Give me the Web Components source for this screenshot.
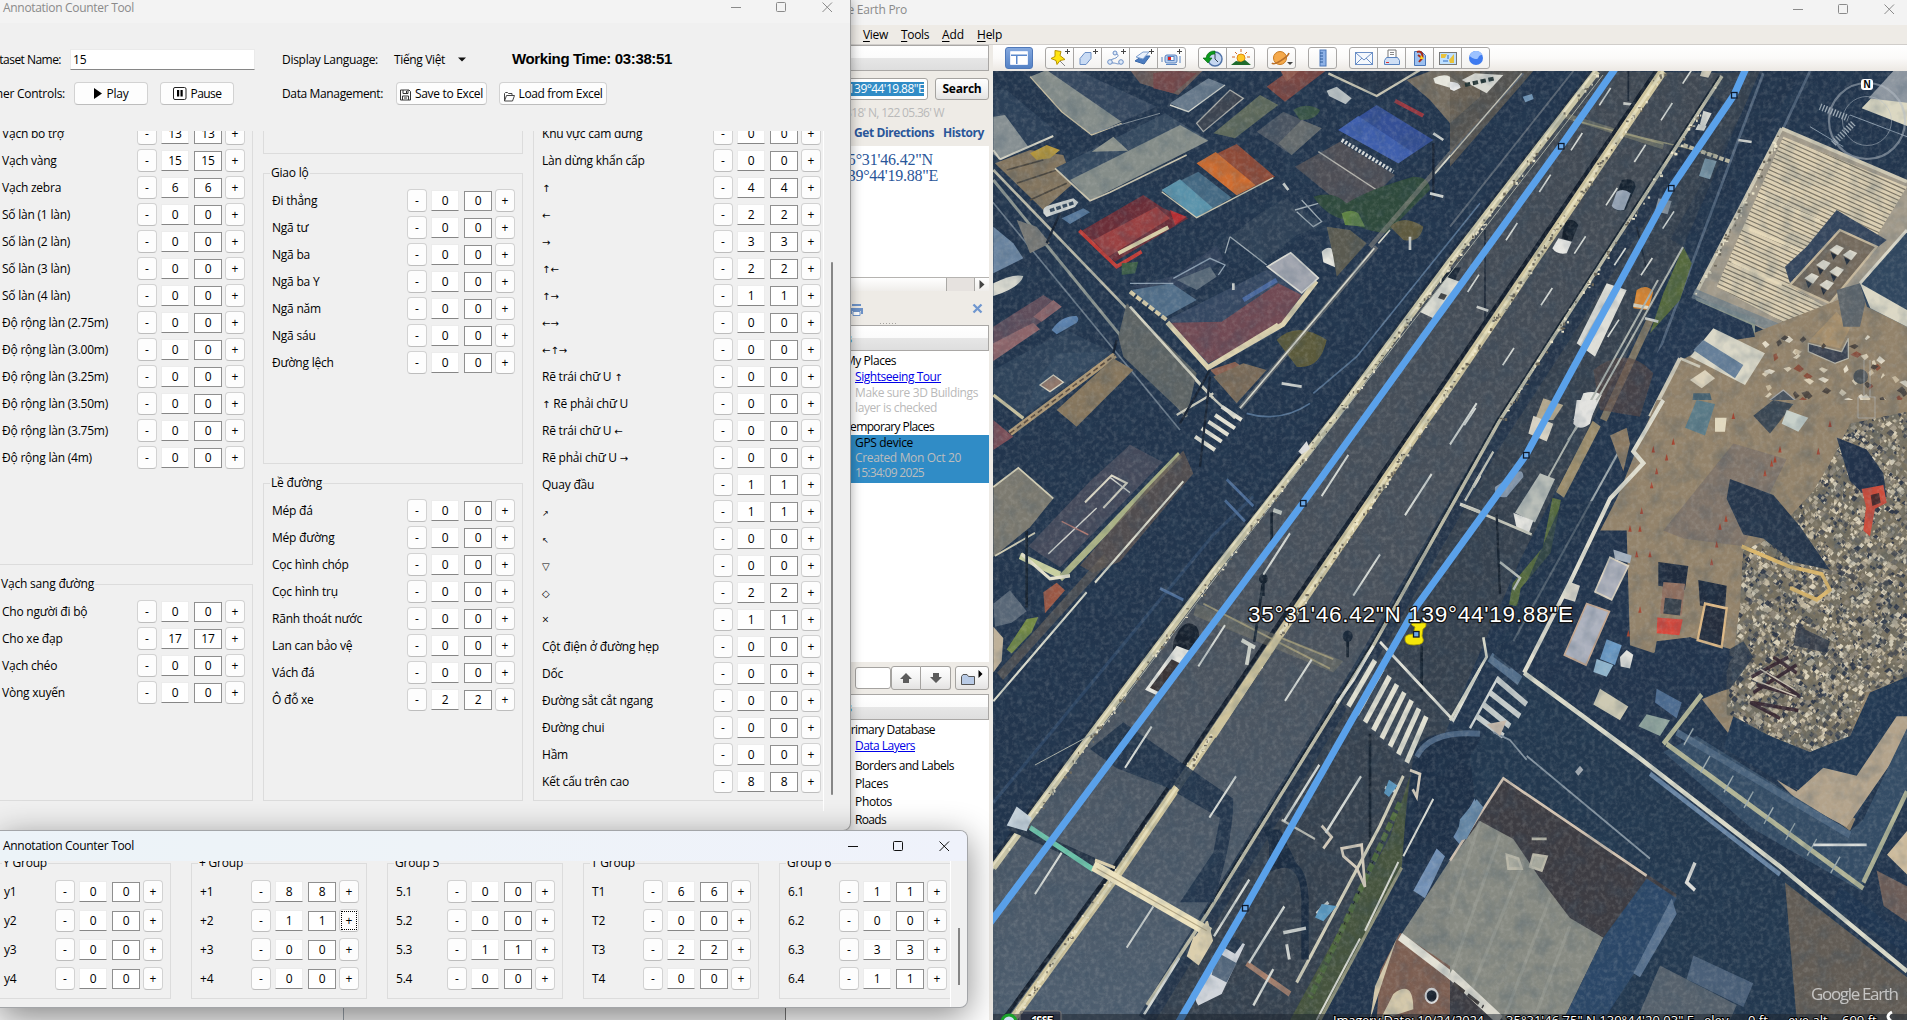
<!DOCTYPE html>
<html lang="vi">
<head>
<meta charset="utf-8">
<title>Annotation Counter Tool</title>
<style>
html,body{margin:0;height:100%;overflow:hidden}
body{font:12px/16px "Open Sans","Noto Sans",sans-serif;color:#000;background:#f3f3f3}
</style>
</head>
<body>
<desk-top></desk-top>
<script>
const def=(name,html,init)=>customElements.define(name,class extends HTMLElement{
  constructor(){super();this.attachShadow({mode:'open'});}
  connectedCallback(){
    if(this.done)return;this.done=true;
    this.shadowRoot.innerHTML=typeof html==='function'?html(this):html;
    if(init)init(this);
  }
});

/* text run set to a known width by letter spacing */
def('fit-text','<style>:host{display:inline-block;white-space:pre}</style><span><slot></slot></span>',el=>{
  const w=+el.getAttribute('w');if(!w)return;
  el.style.letterSpacing='0px';
  const now=el.shadowRoot.querySelector('span').getBoundingClientRect().width;
  el.style.letterSpacing=((w-now)/el.textContent.length).toFixed(3)+'px';
});

def('counter-row',el=>`<style>
:host{display:flex;align-items:center;height:var(--pitch,27px);flex:none}
.l{flex:1;white-space:pre;letter-spacing:-.22px;position:relative;top:.5px}
.b{box-sizing:border-box;width:20px;height:23px;border:1px solid #d2d2d2;border-bottom-color:#bdbdbd;border-radius:4px;background:#fdfdfd;text-align:center;line-height:21px}
.e,.r{box-sizing:border-box;width:28px;text-align:center;background:#fff;letter-spacing:-.2px}
.e{height:21px;border:1px solid #ececec;border-bottom:1px solid #868686;line-height:20px;margin:0 5px 0 4px}
.r{height:20px;border:1px solid #8f8f8f;line-height:18px;margin-right:3px}
.s{font:10px/10px "DejaVu Sans";letter-spacing:0}
.d{font-size:8px}
.f{position:relative}
.f::after{content:"";position:absolute;inset:1px;border:1px dotted #000}
</style><span class="l">${el.getAttribute('label').replace(/[↑←→▽◇]+/g,'<span class="s">$&</span>').replace(/[↗↖]/g,'<span class="s d">$&</span>')}</span><span class="b">-</span><span class="e">${el.getAttribute('n')}</span><span class="r">${el.getAttribute('n')}</span><span class="b ${el.hasAttribute('focused')?'f':''}">+</span>`);

def('counter-group',el=>{
  const rows=(el.getAttribute('rows')||'').split('|').filter(Boolean).map(r=>{
    const[a,b,f]=r.split('=');return`<counter-row label="${a}" n="${b}" ${f?'focused':''}></counter-row>`}).join('');
  const t=el.getAttribute('name');
  return`<style>:host{display:block;flex:none}
fieldset{box-sizing:border-box;height:100%;margin:0;border:1px solid #dcdcdc;padding:6px 7px 0 8px;min-width:0}
legend{padding:0 1px;margin-left:-2px;height:16px;line-height:16px;letter-spacing:-.2px;min-width:1px}
</style><fieldset>${t?`<legend>${t}</legend>`:'<div style="height:15px"></div>'}${rows}</fieldset>`});

def('window-buttons',el=>`<style>:host{display:flex;color:${el.getAttribute('ink')||'#8a8a8a'}}svg{display:block}</style>
<svg width="104" height="12" viewBox="0 0 104 12" fill="none" stroke="currentColor"><path d="M1 6.5h10"/><rect x="46.500" y="1.500" width="9" height="9" rx="1"/><path d="m92.500 1.500 9.500 9.500m0-9.500-9.500 9.500"/></svg>`);

def('tool-button',el=>`<style>:host{display:flex;align-items:center;justify-content:center;box-sizing:border-box;height:23px;border:1px solid #d2d2d2;border-bottom-color:#bdbdbd;border-radius:4px;background:#fdfdfd;gap:5px;white-space:pre}</style><slot></slot>`);

def('main-window',()=>`<style>
:host{display:flex;flex-direction:column;box-sizing:border-box;background:#f0f0f0;border-right:1px solid #9b9b9b;border-bottom:1px solid #aaa;border-radius:0 0 8px 0;overflow:hidden;box-shadow:0 0 12px rgba(0,0,0,.35)}
.t{height:23px;flex:none;background:#f3f3f3;display:flex;justify-content:space-between;color:#8a8a8a;box-sizing:border-box;padding:0 16px 0 3px;line-height:16px}
.t window-buttons{margin-top:1px}
.r{display:flex;align-items:center;flex:none;position:relative}
.r1{height:21px;margin-top:26px}.r2{height:23px;margin-top:12px}
.lab{display:flex;justify-content:flex-end;flex:none}
.in{box-sizing:border-box;width:185px;height:21px;background:#fff;border:1px solid #eaeaea;border-bottom-color:#868686;padding-left:2px;line-height:19px}
.h{font:bold 15px/18px "Liberation Sans",Arial,sans-serif}
.body{display:flex;margin-top:26px;height:680px;flex:none}
.cl{width:823px;border-right:1px solid #fff;overflow:hidden;flex:none}
.cols{display:flex;gap:10px;margin:-33px 0 0 -7px;width:840px}
.c{display:flex;flex-direction:column;gap:11px;flex:none}
.sb{width:2px;height:533px;background:#868686;margin:131px 0 0 7px;border-radius:1px}
</style>
<div class="t"><fit-text w="131">Annotation Counter Tool</fit-text><window-buttons></window-buttons></div>
<div class="r r1"><span class="lab" style="width:61px"><fit-text w="76">Dataset Name:</fit-text></span><span class="in" style="margin-left:9px">15</span>
<fit-text w="96" style="margin-left:27px">Display Language:</fit-text><fit-text w="51" style="margin-left:16px">Tiếng Việt</fit-text>
<svg width="8" height="5" style="margin-left:13px"><path d="M0 .5h8l-4 4z" fill="#111"/></svg>
<fit-text class="h" w="160" style="margin-left:46px;margin-top:-2px">Working Time: 03:38:51</fit-text></div>
<div class="r r2"><span class="lab" style="width:65px"><fit-text w="82">Timer Controls:</fit-text></span>
<tool-button style="width:74px;margin-left:9px"><svg width="8" height="11"><path d="M0 0v11l8-5.500z"/></svg><fit-text w="22">Play</fit-text></tool-button>
<tool-button style="width:74px;margin-left:12px;gap:4px"><svg width="14" height="13" viewBox="0 0 14 13"><rect x=".5" y=".5" width="12.500" height="12" rx="1.500" fill="#fff" stroke="#222"/><path d="M4 3h2.200v6.500H4zM7.500 3h2.200v6.500H7.500z"/></svg><fit-text w="31">Pause</fit-text></tool-button>
<fit-text w="101" style="margin-left:48px">Data Management:</fit-text>
<tool-button style="width:91px;margin-left:13px;gap:4px"><svg width="11" height="12" viewBox="0 0 11 12" fill="none" stroke="#333" style="margin-top:3px"><path d="M.5 1h8.500l1.500 1.500V11H.5zM3 1v3.500h5V1M2.500 11V7h6v4M4 9h3M6.500 2v2"/></svg><fit-text w="68">Save to Excel</fit-text></tool-button>
<tool-button style="width:108px;margin-left:12px;gap:4px"><svg width="11" height="11" viewBox="0 0 11 11" fill="none" stroke="#444" style="margin-top:5px"><path d="M.5 10V2.500l1-1h2l1 1H8v2M.5 10l2-5.500h8L8.500 10z"/></svg><fit-text w="84">Load from Excel</fit-text></tool-button></div>
<div class="body"><div class="cl"><div class="cols">
<div class="c" style="width:260px">
<counter-group style="height:467px" rows="Vạch bổ trợ=13|Vạch vàng=15|Vạch zebra=6|Số làn (1 làn)=0|Số làn (2 làn)=0|Số làn (3 làn)=0|Số làn (4 làn)=0|Độ rộng làn (2.75m)=0|Độ rộng làn (3.00m)=0|Độ rộng làn (3.25m)=0|Độ rộng làn (3.50m)=0|Độ rộng làn (3.75m)=0|Độ rộng làn (4m)=0"></counter-group>
<counter-group style="height:225px" name="Vạch sang đường" rows="Cho người đi bộ=0|Cho xe đạp=17|Vạch chéo=0|Vòng xuyến=0"></counter-group></div>
<div class="c" style="width:260px"><counter-group style="height:56px"></counter-group>
<counter-group style="height:299px" name="Giao lộ" rows="Đi thẳng=0|Ngã tư=0|Ngã ba=0|Ngã ba Y=0|Ngã năm=0|Ngã sáu=0|Đường lệch=0"></counter-group>
<counter-group style="height:326px" name="Lề đường" rows="Mép đá=0|Mép đường=0|Cọc hình chóp=0|Cọc hình trụ=0|Rãnh thoát nước=0|Lan can bảo vệ=0|Vách đá=0|Ô đỗ xe=2"></counter-group></div>
<div class="c" style="width:296px">
<counter-group style="height:703px" rows="Khu vực cấm dừng=0|Làn dừng khẩn cấp=0|↑=4|←=2|→=3|↑←=2|↑→=1|←→=0|←↑→=0|Rẽ trái chữ U ↑=0|↑ Rẽ phải chữ U=0|Rẽ trái chữ U ←=0|Rẽ phải chữ U →=0|Quay đầu=1|↗=1|↖=0|▽=0|◇=2|×=1|Cột điện ở đường hẹp=0|Dốc=0|Đường sắt cắt ngang=0|Đường chui=0|Hầm=0|Kết cấu trên cao=8"></counter-group></div>
</div></div><div class="sb"></div></div>`);

def('second-window',()=>`<style>
:host{display:block;box-sizing:border-box;background:#f0f0f0;border:1px solid #a3a5a8;border-left:0;border-radius:0 8px 8px 0;overflow:hidden;box-shadow:0 8px 34px rgba(0,0,0,.46)}
.t{height:30px;background:linear-gradient(90deg,#ecf3f8,#eef3f8 45%,#eff2fb);display:flex;justify-content:space-between;padding:0 16px 0 3px}
.t fit-text{margin-top:7px}.t window-buttons{margin-top:9px}
.b{display:flex;height:146px}
.cl{width:950px;border-right:1px solid #fff;overflow:hidden;flex:none}
.cols{display:flex;gap:20px;margin:-6px 0 0 -5px;width:970px;--pitch:29px}
counter-group{width:176px;height:144px}
.sb{width:2px;height:57px;background:#868686;margin:67px 0 0 7px}
</style>
<div class="t"><fit-text w="131">Annotation Counter Tool</fit-text><window-buttons ink="#111"></window-buttons></div>
<div class="b"><div class="cl"><div class="cols">
<counter-group name="Y Group" rows="y1=0|y2=0|y3=0|y4=0"></counter-group>
<counter-group name="+ Group" rows="+1=8|+2=1=f|+3=0|+4=0"></counter-group>
<counter-group name="Group 5" rows="5.1=0|5.2=0|5.3=1|5.4=0"></counter-group>
<counter-group name="T Group" rows="T1=6|T2=0|T3=2|T4=0"></counter-group>
<counter-group name="Group 6" rows="6.1=1|6.2=0|6.3=3|6.4=1"></counter-group>
</div></div><div class="sb"></div></div>`);

def('panel-header','<style>:host{display:block;box-sizing:border-box;height:26px;width:203px;border:1px solid #a9a7a5;border-left:0;background:linear-gradient(#fff,#fbfbfb 50%,#e6e6e6 52%,#dedede);color:#2a77b8;font-weight:bold;line-height:26px;text-align:right;padding-right:136px;flex:none}</style><slot></slot>');

def('earth-panel',()=>`<style>
:host{display:flex;flex-direction:column;width:204px;flex:none;background:#eeebe6}
.row{display:flex;align-items:center;flex:none}
.in{box-sizing:border-box;width:142px;height:22px;border:1px solid #a5a3a0;border-radius:3px;background:#fff;display:flex;align-items:center;justify-content:flex-end;padding-right:3px;color:#fff}
.in span{background:#308cc6;height:14px;line-height:14px}
.bt{box-sizing:border-box;border:1px solid #a5a3a0;border-radius:3px;background:linear-gradient(#fff,#f4f4f4 50%,#e4e3e2);display:flex;align-items:center;justify-content:center;flex:none}
.lnk{color:#2a5699;font-weight:bold}
.res{height:131px;margin-top:2px;flex:none;background:#fff;font:16px/16px "Liberation Serif","Times New Roman",serif;color:#2a5699;padding:6px 0 0 54px;box-sizing:border-box;width:203px}
.res fit-text{display:block}
.hs{height:14px;width:203px;box-sizing:border-box;border-top:1px solid #b5b3b0;background:linear-gradient(#fff,#efedea);justify-content:flex-end}
.hs i{width:27px;height:13px;border:solid #aaa8a5;border-width:0 1px;background:#e6e2df}
.tree{background:#fff;width:203px;flex:none;overflow:hidden;box-sizing:border-box}
.tree div{display:flex}
.blue{color:#0000e8;text-decoration:underline}
.g{color:#b9b9b9}
.sel{background:#308cc6;height:48px;flex-direction:column;padding-left:69px;color:#bdbdbd}
.sel span{height:15px}
.dots{width:17px;height:1px;background:repeating-linear-gradient(90deg,#a6a4a0 0 1px,transparent 1px 3px)}
</style>
<panel-header style="padding-right:137px">▼ Search</panel-header>
<div class="row" style="height:22px;margin-top:7px"><span class="in"><span><fit-text w="151">35°31'46.42"N 139°44'19.88"E</fit-text></span></span><span class="bt" style="width:54px;height:22px;margin-left:7px;font-weight:bold"><fit-text w="39">Search</fit-text></span></div>
<div class="row g" style="height:26px;justify-content:flex-end;padding-right:46px;margin-bottom:-3px"><fit-text w="145">ex: 37 25.818' N, 122 05.36' W</fit-text></div>
<div class="row lnk" style="height:20px;margin-left:68px;gap:9px;margin-bottom:1px"><fit-text w="80">Get Directions</fit-text><fit-text w="41">History</fit-text></div>
<div class="res"><fit-text w="93">35°31'46.42"N</fit-text><fit-text w="98">139°44'19.88"E</fit-text></div>
<div class="row hs"><i></i><svg width="14" height="13"><path d="M4.500 2v9l5-4.500z" fill="#444"/></svg></div>
<div class="row" style="height:34px;padding-left:64px;justify-content:space-between;padding-right:7px"><svg width="13" height="13" viewBox="0 0 13 13" style="margin-top:4px"><path d="M2 0h9v2H2zM0 4h13v6h-2V7H2v3H0z" fill="#6e93c8"/><path d="M3 7.500h7v4H3z" fill="#fff" stroke="#6e93c8"/></svg><svg width="11" height="11"><path d="m1.500 1.500 8 8m0-8-8 8" stroke="#6f96cf" stroke-width="2.300"/></svg></div>
<div class="row" style="margin-left:94px;margin-top:-3px;height:3px"><span class="dots"></span></div>
<panel-header>Places</panel-header>
<div class="tree" style="height:311px;padding-top:2px">
<div style="padding-left:59px"><fit-text w="51">My Places</fit-text></div>
<div class="blue" style="padding-left:69px"><fit-text w="86">Sightseeing Tour</fit-text></div>
<div class="g" style="padding-left:69px;height:15px"><fit-text w="123">Make sure 3D Buildings</fit-text></div>
<div class="g" style="padding-left:69px;height:15px"><fit-text w="82">layer is checked</fit-text></div>
<div style="padding:4px 0 0 58px;height:16px"><fit-text w="90">Temporary Places</fit-text></div>
<div class="sel"><span style="color:#000"><fit-text w="58">GPS device</fit-text></span><span><fit-text w="106">Created Mon Oct 20</fit-text></span><span><fit-text w="69">15:34:09 2025</fit-text></span></div>
</div>
<div class="row" style="height:32px;padding-left:69px"><span class="bt" style="background:#fff;width:36px;height:22px"></span><span class="bt" style="width:30px;height:24px;border-radius:3px 0 0 3px"><svg width="12" height="10"><path d="M6 0l6 6H9v4H3V6H0z" fill="#5c5c5c"/></svg></span><span class="bt" style="width:30px;height:24px;border-left:0;border-radius:0 3px 3px 0"><svg width="12" height="10"><path d="M6 10l6-6H9V0H3v4H0z" fill="#5c5c5c"/></svg></span><span class="bt" style="width:34px;height:24px;margin-left:4px"><svg width="22" height="16" viewBox="0 0 22 16"><path d="M.5 14.500V6.500L2 4.500h4l1.500 2h6v8z" fill="#b9cbe6" stroke="#555"/><path d="M17.500 0v8l4-4z"/></svg></span></div>
<panel-header>Layers</panel-header>
<div class="tree" style="flex:1;padding-top:2px">
<div style="padding-left:58px"><fit-text w="91">Primary Database</fit-text></div>
<div class="blue" style="padding-left:69px"><fit-text w="60">Data Layers</fit-text></div>
<div style="padding:4px 0 0 69px"><fit-text w="99">Borders and Labels</fit-text></div>
<div style="padding:2px 0 0 69px"><fit-text w="33">Places</fit-text></div>
<div style="padding:2px 0 0 69px"><fit-text w="37">Photos</fit-text></div>
<div style="padding:2px 0 0 69px"><fit-text w="31">Roads</fit-text></div>
</div>`);

const plus='<path d="M16 3.500h5M18.500 1v5" stroke="#444" fill="none"/>';
const I={
pin:`<path d="M6 2.500l6 1-1 4 5 4-5 1-3 4-1-4-5-2 4-2z" fill="#ffe50f" stroke="#b79200"/><path d="M11 13l5 5" stroke="#888"/>${plus}`,
poly:`<path d="M3 16.500v-6l5-6 6 0v6l-5 6z" fill="#c9dbf3" stroke="#6b8fc6"/>${plus}`,
path:`<path d="M10 5c6 2 2 5-2 6s-4 4 0 4 4 2 8 0" fill="none" stroke="#6b8fc6"/><g fill="#dfeaf8" stroke="#6b8fc6"><circle cx="10" cy="5" r="2"/><circle cx="5" cy="14" r="2.300"/><circle cx="16" cy="14" r="2.300"/></g>${plus}`,
over:`<path d="M2 13l7-5h8l-6 8z" fill="#4b7cc0" stroke="#3a68a8"/><path d="M3 9l7-5h6l-6 7z" fill="#eaf1fb" stroke="#7fa0cf"/>${plus}`,
cam:`<rect x="4" y="7" width="12" height="8" rx="2" fill="#b9cfee" stroke="#5a84c0"/><rect x="7" y="8.500" width="6" height="4" fill="#fff" stroke="#5a84c0"/><rect x="7" y="9" width="3" height="3" fill="#d22"/><path d="M1 9v5M19 8v7M5 16.500h11" stroke="#5a84c0"/>${plus}`,
clock:`<circle cx="13" cy="11" r="7" fill="#c5d6f0" stroke="#5073a8" stroke-width="1.500"/><path d="M13 6v5l3 3" fill="none" stroke="#345"/><path d="M13 3a8 8 0 0 0-9 7H1l5 5 4-5H7a6 6 0 0 1 6-4z" fill="#0a9a1c" stroke="#05600f" stroke-width=".6"/>`,
sun:`<circle cx="11" cy="10" r="4" fill="#ffc928" stroke="#e08a10"/><path d="M11 1v3M5 4l2 2M17 4l-2 2M2 9h3M17 9h3" stroke="#cf6a2a"/><path d="M1 17l5-4 5 1 4-2 6 5z" fill="#1f6b2c"/>`,
planet:`<circle cx="9" cy="10" r="6.500" fill="#f5a94a" stroke="#c87a20"/><path d="M1 15c2 3 16-6 17-10" fill="none" stroke="#b86f2a" stroke-width="1.600"/><path d="M16 14h6l-3 3z" fill="#444"/>`,
ruler:`<rect x="8" y="2" width="6" height="16" fill="#8db1e6" stroke="#4a77b8"/><path d="M8 5h3M8 8h3M8 11h3M8 14h3" stroke="#2d5a9a"/>`,
mail:`<rect x="2.500" y="4.500" width="17" height="12" fill="#f4f8fd" stroke="#6b8fc6"/><path d="M3 5l8 7 8-7M3 16l6-6M19 16l-6-6" fill="none" stroke="#6b8fc6"/>`,
print:`<path d="M7 9V2h8v7" fill="#fff" stroke="#777"/><path d="M9 4.500h4M9 6.500h4" stroke="#888"/><path d="M3.500 12.500l2-3h11l2 3v4h-15z" fill="#cfdff5" stroke="#5a84c0"/><path d="M5 14.500h3" stroke="#d33"/>`,
page:`<path d="M5.500 3.500h7l4 4v10h-11z" fill="#9cc0f0" stroke="#4a77b8"/><path d="M8 4c5-2 7 4 4 8M9 7l4 3-3 4" stroke="#a82c1c" stroke-width="2" fill="none"/><path d="M12 7l3 4h-4z" fill="#ffd21e"/>`,
map:`<rect x="2.500" y="4.500" width="17" height="12" fill="#bfe0ff" stroke="#777"/><path d="M4 6h6l-2 4-4 0zM12 12l5-6v9h-4z" fill="#e9c23a"/><path d="M6 13h5M11 7v4" stroke="#2f6ac0"/>`,
globe:`<circle cx="11" cy="10" r="7" fill="#3e7bf0"/><path d="M4.500 8a7 7 0 0 1 13-1c-5-1-3 5-7 4s-4-2-6-3z" fill="#9cc2ff"/>`
};
def('icon-strip',el=>{
  const k=el.getAttribute('icons').split(' ');
  return`<style>:host{display:flex;box-sizing:border-box;height:22px;border:1px solid #a9a7a5;border-radius:3px;background:linear-gradient(#fff,#f3f2f0);margin-left:12px;flex:none}
span{width:27px;display:flex;justify-content:center;align-items:center}span:first-child{width:26px}span+span{border-left:1px solid #a9a7a5}svg{display:block;overflow:visible}</style>`+k.map(i=>`<span><svg width="22" height="20" viewBox="0 0 22 20">${I[i]}</svg></span>`).join('');
});

def('satellite-map',()=>{
  const dash=(pts,dx,dy,w)=>`<path d="${pts.map(([x,y])=>`M${x-dx} ${y+dy}L${x+dx} ${y-dy}`).join('')}" stroke="#d5d9d4" stroke-width="${w}" fill="none"/>`;
  let debris='',cones='',seed=7;const rnd=()=>(seed=(seed*16807)%2147483647)/2147483647;
  const cols=['#c9bda3','#8b8375','#4a4c50','#ddd3bb','#6a6862','#a39a88','#333a48','#b5ab95'];
  for(let i=0;i<5200;i++){const x=830+rnd()*560,y=30+rnd()*880,s=6+rnd()*11;debris+=`<path d="M${x|0} ${y|0}l${(s*rnd())|0} ${(-s*.6)|0}l${(s*.7)|0} ${(s*.5)|0}l${(-s*.6)|0} ${(s*.6)|0}z" fill="${cols[(rnd()*8)|0]}"/>`}
  [[650,145],[670,105],[605,215],[620,180],[575,280],[570,325],[540,325],[600,390],[800,365],[785,410],[990,125],[965,160],[945,185],[975,150],[810,320],[828,300],[535,590],[570,530],[850,40],[1105,130],[1140,60],[560,390],[610,125]].forEach(([x,y])=>cones+=`<path d="M${x} ${y-9}l5 17h-10z" fill="#a5432f"/>`);
  let roof='';for(let i=0;i<46;i++)roof+=`M${1000-i*6} ${405+i*11}l390 175`;
  let edge='';
  const rub=(x1,y1,x2,y2,n)=>{for(let i=0;i<n;i++){const t=rnd();edge+=`<rect x="${(x1+(x2-x1)*t+rnd()*5-2.5).toFixed(1)}" y="${(y1+(y2-y1)*t+rnd()*5-2.5).toFixed(1)}" width="${(1+rnd()*2).toFixed(1)}" height="${(1+rnd()*2).toFixed(1)}" fill="${rnd()<.5?'#6b6557':'#f0e8cc'}"/>`}};
  rub(1663,71,1452,383,130);rub(1452,383,1280,634,120);rub(1280,634,1012,1020,150);rub(1597,71,1333,420,130);rub(1332,420,993,868,120);rub(1723,76,1500,420,90);rub(1782,128,1695,296,60);
  const node=(x,y)=>`<rect x="${x-2.5}" y="${y-2.5}" width="5.500" height="5.500" fill="#6da9e8" stroke="#0d1a2c" stroke-width="1.300"/>`;
  return`<style>:host{display:block;flex:1;position:relative;overflow:hidden;background:#22364e}svg{position:absolute;inset:0;display:block}</style>
<svg width="914" height="949" viewBox="993 71 914 949">
<defs>
<filter id="n" x="0" y="0" width="1" height="1"><feTurbulence type="fractalNoise" baseFrequency=".22" numOctaves="3" seed="4"/><feColorMatrix values="0 0 0 0 .6  0 0 0 0 .6  0 0 0 0 .57  1.500 0 0 0 -.62"/></filter>
<filter id="d" x="0" y="0" width="1" height="1"><feTurbulence type="fractalNoise" baseFrequency=".06" numOctaves="3" seed="9"/><feColorMatrix values="0 0 0 0 .03  0 0 0 0 .07  0 0 0 0 .12  2 0 0 0 -.85"/></filter>
<clipPath id="pile"><path d="M1371 30L1200 60 1140 160 1090 230 960 350 880 380 870 520 850 650 770 790 850 800 960 850 1080 890 1200 850 1250 740 1371 700z"/></clipPath>
<linearGradient id="as" x1="0" y1="0" x2="0" y2="1"><stop offset="0" stop-color="#404852"/><stop offset=".6" stop-color="#4b535d"/><stop offset="1" stop-color="#4f5f70"/></linearGradient>
<clipPath id="roofc"><path d="M1000 410L1371 560 1260 740 1170 680 1025 860 1150 935 1090 1015 800 860z"/></clipPath>
</defs>
<rect x="993" y="71" width="914" height="949" fill="#22354d"/>

<g transform="translate(980 70) scale(.33333)">
<path d="M40 330L620 1040" stroke="#8e9691" stroke-width="9"/><path d="M40 300L700 985" stroke="#b9b8a8" stroke-width="8"/><path d="M0 350L600 1080" stroke="#6a7a8a" stroke-width="5"/>
<path d="M150 20L270-10 530 110 415 160 335 195 250 130z" fill="#36485f"/><path d="M150 20L200 0 425 155 335 195 240 120z" fill="#868e8b"/>
<path d="M150 20l95 105 90 70 90-35" fill="none" stroke="#c9bfa2" stroke-width="4"/>
<path d="M40 60L80 60 235 190 60 265 40 260z" fill="#2c4058"/><path d="M40 140l35-5 70 95-85 38-20-15z" fill="#868f92"/><path d="M60 268l160-70M40 240l20 28" stroke="#d4d2c3" stroke-width="6" fill="none"/>
<path d="M45 280L150 240 250 255 280 340 190 420z" fill="#83755f"/><path d="M150 250l50-25 40 15-30 25-40 5z" fill="#b3953c"/><path d="M80 300l110-30M110 340l120-40M150 390l110-50" stroke="#4b463e" stroke-width="5"/>
<path d="M225 295L555 130 685 210 330 390z" fill="#364a60"/><path d="M270 330L600 165 685 212 330 392z" fill="#858d89"/><path d="M335 245l65-45 45 42z" fill="#8e948d"/>
<path d="M225 295l105 97 60-25 230-112" fill="none" stroke="#cbc4ad" stroke-width="5"/><path d="M330 190L540 130" stroke="#7f8c96" stroke-width="3"/>
<path d="M450 0h220l-75 75-115-35z" fill="#6b5a57"/><path d="M520 10l60-10 70 10-70 60-60-15z" fill="#74484a"/><path d="M570 100l115-75 50 20-110 80z" fill="#687a8c"/><path d="M570 105l55 20 110-80" stroke="#d5d7cf" stroke-width="4" fill="none"/>
<path d="M650 160l100-100 40 25-120 100z" fill="#3d4450" stroke="#a7a9a6" stroke-width="4"/><path d="M700 190l140-115 55 30-130 100z" fill="#5f6a5c"/><path d="M860 50L930 0h110l-125 95z" fill="#7a4743"/><path d="M900 0h60l-40 35z" fill="#8f5b50"/>
<path d="M1045 10L1190 78 1320 0z" fill="#263447"/><path d="M1045 10L1190 78 1320 0" stroke="#c8c5b2" stroke-width="7" fill="none"/><path d="M1280 30l80-30h140v80l-90 80-60-70z" fill="#756d60"/><path d="M1360 25q30-15 50-5l30 20-15 18-60-18z" fill="#e8e8df"/><path d="M1040 62l30-12 45 35-18 18-50-25z" fill="#b8c0c2"/>
<path d="M830 185l80-60 115 50-90 80z" fill="#4a5461"/><path d="M895 220l70-70 60 25-90 80z" fill="#656b6d"/>
<path d="M1075 180L1190 105 1360 210 1255 280z" fill="#344f96"/><path d="M1075 180l60-42 165 110-45 32z" fill="#3f5fad"/><path d="M1085 210l155 95" stroke="#d9dcdb" stroke-width="12" stroke-dasharray="7 5"/><path d="M1245 92l85 45" stroke="#9a3840" stroke-width="12"/>
<path d="M945 290l135-75 165 100-50 50-90 55z" fill="#4e4e55"/><path d="M1015 245l180 118" stroke="#b6b5ae" stroke-width="4"/>
<path d="M650 280L770 222 885 320 770 376z" fill="#8d4a38"/><path d="M650 280l57-34 120 100-57 30z" fill="#cf6d30"/><path d="M545 360l110-55 100 78-105 60z" fill="#456a84"/><path d="M545 360l55-32 98 85-48 30z" fill="#5b94ac"/><path d="M545 365l105 78 230-120" stroke="#cfcab1" stroke-width="4" fill="none"/>
<path d="M300 485L490 375 550 415 625 445 480 530 405 575z" fill="#6b2e38"/><path d="M340 510L530 410 570 445 385 560z" fill="#9a4142"/><path d="M298 482l112 108 75-45" stroke="#bf3c36" stroke-width="11" fill="none"/><path d="M415 550l150-78" stroke="#d9cfa8" stroke-width="12"/><path d="M570 420l50 20-35 25z" fill="#b22f33"/>
<path d="M190 430q-5-20 20-25l70-20 15 12-10 14-85 30z" fill="#d4d8d6"/><path d="M210 422l75-25" stroke="#33475c" stroke-width="10" stroke-dasharray="14 6"/><path d="M245 445l65-30 20 12-60 35z" fill="#56779a"/>
<path d="M40 470l60 50 30 45-90 45z" fill="#6c86a2"/><path d="M40 640q60-30 90-22-10 35-90 60z" fill="#dadad0"/><path d="M110 450l60 20 40 50-60 30z" fill="#7a7a76"/>
<path d="M40 770L190 675 245 710 40 860z" fill="#5f4d5b"/><path d="M40 820l120-62 20 20-140 95z" fill="#8d656a"/><path d="M160 740l60-50 25 20-60 45z" fill="#8d656a"/><path d="M215 780q30-45 75-42 10 10 0 20l-60 35z" fill="#5e84b0"/>
<path d="M40 900L260 780 400 850 130 1040 40 990z" fill="#2e4259"/><path d="M170 940l60-90 160-5-260 190z" fill="#354a61"/><path d="M90 1090L405 855" stroke="#b49c76" stroke-width="18"/><path d="M90 1090L405 855" stroke="#5c4c3e" stroke-width="5" stroke-dasharray="16 10"/><path d="M230 1020l170-155 60 35-170 170z" fill="#87775e"/><path d="M40 975l90 70" stroke="#c9c29f" stroke-width="10"/><path d="M180 945l40-30 30 22-40 28z" fill="#8f766a" stroke="#d7d0bd" stroke-width="4"/>
<path d="M40 1050l60 50-60 40z" fill="#7a4f58"/>
<path d="M450 650l140-35 120-90 20 40-90 80-60 30z" fill="#32425b"/><path d="M455 660l120-20 75 50-100 55z" fill="#526f8a"/><path d="M590 630l100-40 20 30-60 40z" fill="#5b6b7a"/><path d="M450 640h130M580 625l110-60 45 20-20 30" stroke="#8da0b2" stroke-width="4" fill="none"/>
<path d="M560 750L860 600 1010 640 900 780 685 900z" fill="#364862"/><path d="M570 758l155-3L895 640l70 35-70 100-210 105z" fill="#714a54"/><path d="M562 757l122 136 225-130 100-130M684 893L895 765" stroke="#e0d5b0" stroke-width="15" fill="none"/><path d="M862 590l70-42 83 76-50 45z" fill="#a2a6b0" stroke="#dcdcd5" stroke-width="5"/><path d="M790 690l100-60" stroke="#4a69a0" stroke-width="14"/>
<path d="M450 665l110 85" stroke="#d8cda9" stroke-width="12" stroke-dasharray="18 6"/><path d="M690 900l75-25 35 25-70 40z" fill="#8c6151"/><path d="M440 700l100 100 110 110-30 130L430 860 415 800z" fill="#5e6464"/><path d="M700 920l90-40 70 20-90 100z" fill="#7a6b59"/>
<path d="M450 710L700 985" stroke="#d5d3c2" stroke-width="8"/>
<path d="M750 500l90-70 80-45 110 80-80 30-100 80z" fill="#2f4156"/><path d="M750 500l110 85M750 500l-15 50M945 420l70-20M950 425l50 45 25-15-60-65" stroke="#9fabb3" stroke-width="4" fill="none"/><path d="M1025 545q20-20 35-5l25 30-20 22-35-15z" fill="#e6e6df"/>
<path d="M1000 380q60-20 100 20 60-40 200-80 50 0 50 40l-130 130q-80-10-120-40-60-10-100-70z" fill="#2f4a3c"/><path d="M1085 430q30-15 50 0l20 40-60-5z" fill="#5f8344"/><path d="M940 120q40-25 80 0-10 30-60 30z" fill="#3a5545"/><path d="M1230 470q40-40 100 0-10 50-60 40z" fill="#5e5a40"/><path d="M1040 470l70 10 50 40-90 100-10-60z" fill="#5a5a50"/><path d="M890 810q60-60 150 0-20 90-90 80z" fill="#5b5a3b"/><path d="M425 580l50-5-10 35-40 5z" fill="#3e5f46"/>
<path d="M780 1015L1190 530M1170 530L1480 170 1500 150" stroke="#8a8880" stroke-width="14" opacity=".55"/><path d="M780 1015L1183 535M1195 520l35-40M1365 310L1500 155" stroke="#d8d8cb" stroke-width="5"/>
<path d="M1000 970L1130 860 1500 400" fill="none" stroke="#54708f" stroke-width="5"/><path d="M800 1030q100 30 190-30" fill="none" stroke="#557394" stroke-width="5"/>
<path d="M700 985l65 60M590 1035l110-65" stroke="#d0cfc0" stroke-width="7"/><path d="M645 1100l60 40M665 1075l60 40M685 1055l60 40M705 1035l60 40M725 1010l60 40" stroke="#e4e2d4" stroke-width="12"/>
<path d="M660 1190l30-270M1360 220v170M600 1060l90-160M200 520l40-90M400 850l10-40" stroke="#172232" stroke-width="7"/>
<path d="M1360 190l30 20M1350 370l40 10M1290 540v-40M910 340l15 20M760 660v-20M905 940l60 10" stroke="#ccd0cd" stroke-width="8"/>
</g>

<path d="M1597 71L1450 262 1333 420 1213 573 993 868V1020H1160L1373 646 1500 420 1723 73z" fill="url(#as)"/>
<path d="M1723 73L1500 420 1373 646 1147 1020H1290L1416 800 1520 560 1683 247 1760 71z" fill="#36414e"/>
<path d="M1716 98L1492 444 1364 665 1146 1020" stroke="#22344a" stroke-width="17" fill="none" opacity=".85"/>

<g transform="translate(1450 0) scale(.33333)">
<path d="M0 213h120L250 213 0 500z" fill="#655e52" opacity=".75"/><path d="M0 465L220 220M0 680L370 213" stroke="#5a6674" stroke-width="6"/><path d="M0 470L215 220" stroke="#c8c5b5" stroke-width="4"/>
<path d="M35 240l40-20 85 5-50 55z" fill="#d9d9d2"/><path d="M45 255l90-20" stroke="#233" stroke-width="12" stroke-dasharray="16 8"/><path d="M0 245q30 0 32 18l-20 10-12-5z" fill="#eee"/><path d="M218 290l28-8 5 15-25 10z" fill="#6f93b4"/>
<path d="M1000 213L700 740" stroke="#23344a" stroke-width="90" opacity=".5"/><path d="M1080 213L960 470M940 220L610 1100" stroke="#4e6178" stroke-width="8" fill="none"/>
<path d="M340 345L640 440" stroke="#8a8a72" stroke-width="16" opacity=".55"/><path d="M370 360L640 432M500 395L800 465" stroke="#b0ab82" stroke-width="4" opacity=".7"/><path d="M700 435l140 50" stroke="#b7b5a0" stroke-width="12" stroke-dasharray="14 5"/>
<path d="M1110 320l85 35M1150 430l60-60" stroke="#9fabb5" stroke-width="20" stroke-dasharray="4 5"/><path d="M1080 380l100 60M1200 345L1371 410" stroke="#8899aa" stroke-width="3"/>
<path d="M1235 325L1340 213h31v165z" fill="#dcd8c2"/><path d="M1255 295l75-82h41v95z" fill="#8d96a0"/>
<path d="M995 385L1371 545v170L1100 1070 735 885z" fill="#a39b8b"/><path d="M1000 410L1371 560 1260 740 1170 680 1025 860 1150 935 1090 1015 800 860z" fill="#dccfb2"/><path d="${roof}" stroke="#7c7565" stroke-width="3.500" clip-path="url(#roofc)"/>
<path d="M995 385L735 885M995 385L1371 545" stroke="#cfc9b4" stroke-width="11" fill="none"/><path d="M925 585l185 78M880 680l175 72M845 785l150 70" stroke="#e6d9ba" stroke-width="8"/>
<path d="M1160 630L1310 720 1260 760 1170 690 1020 850 1005 800 1070 740z" fill="#35455c"/><path d="M1170 690L1280 740 1140 910 1020 855z" fill="#746a5d"/><path d="M1170 690L1280 740 1140 910 1020 855z" fill="none" stroke="#c7b89c" stroke-width="7"/>
${[[1160,750],[1200,765],[1120,795],[1160,815],[1085,835],[1130,855]].map(([x,y])=>`<path d="M${x-22} ${y}l22-16 22 10-18 22z" fill="#dcd9cc"/><path d="M${x-18} ${y+6}l18 10-10 14z" fill="#222c3a"/>`).join('')}
<path d="M735 890l180 65v55l-165-75z" fill="#89958a"/><path d="M730 880l360 150" stroke="#6f7f8a" stroke-width="30" opacity=".7"/>
<path d="M690 1075L740 950 910 1000 1240 870 1371 960V1260H600z" fill="#93836b"/>
<path d="M1160 935l40 50-30 60-95-20z" fill="#a8906d"/><path d="M1075 1030l100 25 20-40v60l-40 15-80-35z" fill="#3b4250" stroke="#b8b5a8" stroke-width="4"/>
<path d="M1160 870l70-20 20 40-20 90-50 0z" fill="#5f666b"/>
<path d="M1371 690v290l-120-60-20-65z" fill="#31475f"/><path d="M1230 850l141 80v50l-110-55z" fill="#ddd9c6"/><path d="M1371 690L1230 850" stroke="#dcd8c8" stroke-width="9"/>
<path d="M735 900l170 75 10 35-125 20-95 50-70 90-40-60z" fill="#243750"/>
<path d="M790 985l155 75-60 95-165-85z" fill="#dcd9c8"/><path d="M730 1050l30-30 120 75-25 40z" fill="#67809a"/><path d="M690 1075L600 1250" stroke="#cfcab8" stroke-width="12"/><path d="M690 1075l60 25" stroke="#cfcab8" stroke-width="8"/><path d="M720 1140l45-30 30 25-40 30z" fill="#ddd3bb"/>
<path d="M730 1180l50 0 20 80h-80z" fill="#486270"/><path d="M920 1230l80-60 70 60-60 30z" fill="#4b5560" stroke="#aaa" stroke-width="4"/>
${Array.from({length:60},()=>{const x=930+rnd()*430,y=1010+rnd()*230;return`<path d="M${x|0} ${y|0}l${6+rnd()*14|0} ${-4-rnd()*10|0} ${6+rnd()*14|0} ${6+rnd()*10|0} ${-12} ${10}z" fill="${['#d9cdb4','#4d4640','#8a4f3c','#c5b79c','#e5dcc8'][rnd()*5|0]}"/>`}).join('')}
<circle cx="1232" cy="1130" r="22" fill="#4e5356"/>
<path d="M700 740L725 790 690 900 600 1000 640 880z" fill="#55693d"/><path d="M600 960L460 1260" stroke="#7d7462" stroke-width="22"/><path d="M430 1110q100-80 180 10l-40 130-120-20z" fill="#5d4a45" opacity=".6"/>
<path d="M560 870q30-20 50 5l-15 55-45-5z" fill="#e58a2e"/><path d="M550 915l45 8" stroke="#e6dcc5" stroke-width="10"/>
<path d="M470 850l60 20-95 200-55-40z" fill="#dfdfd8"/><path d="M495 870l-100 170" stroke="#c1c3bf" stroke-width="14"/>
<path d="M515 540q40-10 42 20l-30 70q-30 10-40-12z" fill="#162331"/><path d="M500 575q20-12 42 5l-20 50q-25 5-37-12z" fill="#9aa7b8"/><path d="M345 660q30-5 40 15l-20 50-30-10z" fill="#151f2b"/><path d="M325 715l40 10-15 35q-30 5-43-15z" fill="#e8e8e4"/><path d="M765 475l35 8-20 55-33-10z" fill="#7692a3"/><path d="M625 595l40 8-12 40-38-10z" fill="#85919c"/><path d="M760 332l25 8-20 40-15-8zM745 372l25 5-8 15-26-3z" fill="#d6d8d2"/><path d="M755 213h30l-10 20-25-5z" fill="#d9d2bd"/>
<path d="M280 1195l60 20-30 45h-55z" fill="#b1a68d"/><path d="M400 1180q35-10 55 5l-35 75h-50z" fill="#e5e5e0"/>
<path d="M105 690v270M535 213v90M560 680l30 130" stroke="#1d2836" stroke-width="5"/><path d="M520 310l40 5M80 920l35 12M865 420l40 6M585 955l40 10" stroke="#c9ccc8" stroke-width="8"/>
</g>
<path d="M1443 270l18-3-10 22-12 8z" fill="#1a2533"/><path d="M1447 277l16 6-26 37-17-8z" fill="#dcdcd2"/><path d="M1441 293l6 2-3 5-6-2z" fill="#444"/>

<path d="M1592 71L1445 262 1328 420 1208 573 1088 732 991 862" fill="none" stroke="#1b2a3e" stroke-width="4"/>
<path d="M1597 71L1450 262 1333 420 1213 573 1093 732 993 868" fill="none" stroke="#cbc6a6" stroke-width="7"/><path d="M1595 71L1331 420 1211 573 991 868" fill="none" stroke="#e5dfc2" stroke-width="2"/><path d="M1603 75L1219 573 1100 730 1035 765" fill="none" stroke="#a9aea4" stroke-width="1"/>
<path d="M1656 71L1446 380 1273 632 1170 785 1110 873 1003 1020" fill="none" stroke="#141e2c" stroke-width="4"/>
<path d="M1663 71L1452 383 1423 424 1280 634 1177 787 1117 875 1012 1020" fill="none" stroke="#cfc49c" stroke-width="8.500"/><path d="M1663 71L1452 383 1423 424 1280 634 1177 787 1117 875 1012 1020" fill="none" stroke="#e6deba" stroke-width="3"/>
<path d="M1722 76L1500 420 1373 646 1207 914 1147 1005" fill="none" stroke="#b9b8a4" stroke-width="3.500"/><path d="M1719 76L1497 420 1370 646 1204 914" fill="none" stroke="#16222f" stroke-width="1.500"/>
<path d="M1658 280L1540 492M1683 247L1600 395 1568 440" stroke="#aeb4ae" stroke-width="2" fill="none"/>
${edge}
<g transform="translate(1450 0) scale(.33333)">
${dash([[465,290],[380,425],[285,550],[185,695],[70,850],[715,225],[650,335],[570,460],[485,590],[390,735],[290,890],[175,1070],[60,1250],[655,660],[590,800],[510,770],[490,985]],17,26,5)}
</g>

<g transform="translate(980 420) scale(.33333 .38265)">
<path d="M40 175l75-50 105 80-70 75-110 78z" fill="#7c7a70"/><path d="M40 175l75-50 105 80M45 355l120-60" stroke="#d2cdb4" stroke-width="5" fill="none"/>
<path d="M145 330L330 160 450 65 548 110 240 385z" fill="#454a5b"/><path d="M240 415L600 90" stroke="#a9b084" stroke-width="18"/><path d="M120 355l120 50" stroke="#c9cf9f" stroke-width="18"/><path d="M125 350l85 65 60-8" stroke="#e6e2cc" stroke-width="9" fill="none"/><path d="M315 215l80-70 45 20-70 65" stroke="#dcd8c6" stroke-width="6" fill="none"/><path d="M205 350l145-120M390 150l60 40" stroke="#cfd1cb" stroke-width="4"/><path d="M245 265l80 35" stroke="#b07a72" stroke-width="4"/>
<path d="M190 450l40-25 25 20-60 60z" fill="#9a5744"/><path d="M300 380l200-200 110-100 30 60-220 230-80 30z" fill="#5e5450" opacity=".8"/><path d="M40 735L320 450M345 425L610 160" stroke="#d9dacb" stroke-width="6"/><path d="M60 670L380 360" stroke="#635c55" stroke-width="26" opacity=".65"/>
<path d="M40 480l50-35 50 55-45 30-50 10z" fill="#5a6878"/><path d="M80 600l60-80 35-5-20 40-60 55z" fill="#748a45"/><path d="M40 540l30 30-5 60-25 30z" fill="#bfb199"/>
<path d="M40 1000L700 300 820 200" stroke="#2d4563" stroke-width="9" fill="none"/><path d="M540 440l70 30M740 155l80 70M735 210l60 55" stroke="#4c6c96" stroke-width="8"/>
<path d="M90 1060L350 1160" stroke="#253446" stroke-width="26"/><path d="M330 860L430 790 760 990Q760 1100 700 1260L600 1260 700 1130 720 1040 560 960 410 910z" fill="#1e3149" opacity=".85"/>
<path d="M650 480L1090 630 1060 660 640 510z" fill="#7f7d6a" opacity=".45"/><path d="M670 480L1050 650M890 565l170 60" stroke="#aaa27c" stroke-width="5" opacity=".8"/>
<path d="M580 580q30-70 70-40 20 30-15 75l-60 20z" fill="#17212e"/><path d="M590 590l45 15-90 120-50-20z" fill="#e6e6df"/><path d="M575 625l35 15-65 75-35-15z" fill="#3b3435"/><path d="M980 55l10 20-25 15-10-8z" fill="#ddd"/>
<path d="M850 400v60M848 430l-25 150M875 240v90M1325 590v120M1170 820v350M1103 560v60M140 290v200" stroke="#16222f" stroke-width="8"/><circle cx="850" cy="415" r="13" fill="#16222f"/><circle cx="1103" cy="565" r="15" fill="#1a2838"/><path d="M785 575l40 20M810 590l-10 50M880 235l25 8" stroke="#ccd0c8" stroke-width="11"/>
<path d="M410 1190L590 960M900 560L700 825" stroke="#cfc49c" stroke-width="20"/><path d="M410 1190L590 960" stroke="#e6deba" stroke-width="8"/>
<path d="M150 1065L340 1175" stroke="#6cc5aa" stroke-width="14"/><path d="M80 1060l30-50 45 30-15 35z" fill="#c8d4dd"/><path d="M340 1165L690 1340" stroke="#efe4bf" stroke-width="28"/><path d="M345 1150l60 20M680 1310l15 50-40 60-30-20 20-50" fill="#dccfad" stroke="#dccfad" stroke-width="8"/><path d="M350 1172L680 1335" stroke="#b3a582" stroke-width="3"/>
<path d="M1180 620L1340 770 1280 910 1085 740z" fill="#3a4654"/>${Array.from({length:8},(_,i)=>`<path d="M${1105+i*25} ${748+i*21}L${1185+i*22} ${628+i*21}" stroke="#e2e1d2" stroke-width="15"/>`).join('')}
<path d="M1200 580L1420 785 1500 650M1180 590l-60 90-50 60" stroke="#e3e3d8" stroke-width="8" fill="none"/>
<path d="M1440 220l60 20M1480 175l20-30" stroke="#d5d6ce" stroke-width="9"/>
<path d="M1300 880q10-80 200-60v200l-70 140-170 0z" fill="#1e3047"/><path d="M1310 880q40-70 190-60" stroke="#4d6683" stroke-width="16" fill="none"/>
<path d="M1290 930L1230 1090 930 1568h90L1265 1170 1280 1000z" fill="#46543e"/><path d="M1270 930L1200 1060 950 1470" stroke="#d1ceb9" stroke-width="9" fill="none"/><path d="M1260 1000l-120 230-150 280" stroke="#4f6a3d" stroke-width="16" stroke-dasharray="22 8"/>
<path d="M1265 1170L1020 1568" stroke="#8d9078" stroke-width="9"/>
<path d="M1155 1335l100-180M1140 1355L1010 1568M1360 990l-90 150" stroke="#d8dad2" stroke-width="6"/><path d="M800 1420l130 80" stroke="#a57e6a" stroke-width="15"/><path d="M905 1045l100 50" stroke="#b6b8b0" stroke-width="6"/><path d="M1085 1120l60-10 10 110-25-50-40-30zM1290 915l30 10-10 60-12-20M1025 1060l30 30-25 30" fill="none" stroke="#d4cbbb" stroke-width="8"/>
<path d="M860 1060l40 100q70-10 75 90v160" stroke="#1b2c41" stroke-width="22" fill="none"/><path d="M865 1070l35 0 50 90-80 20z" fill="#1b2c41"/>
<path d="M910 1340l68-12M920 1370l8 40M1010 1290l35-30M1215 960l30 10" stroke="#ced2cf" stroke-width="9"/><path d="M1005 1300l20-35 45 5-40 40zM1212 975l15-35 25 15-25 30z" fill="#5c9bc4"/>
<path d="M750 1350l45 20-70 130-70 30q-20-20 10-60z" fill="#d2d6dc"/><path d="M710 1390l60 30-30 50-45-20z" fill="#56697e"/><path d="M755 1345l35 20-25 30-30-15z" fill="#26374c"/>
<path d="M1490 980l10 0v70l-60 60-20-20z" fill="#6c8bae"/><path d="M1370 1120l25 20-60 110-35-20z" fill="#7593b8"/>
<path d="M1500 1030V1568h-20L1260 1350z" fill="#83867f"/><path d="M1260 1340L1200 1440 1190 1568H1500V1480z" fill="#7d5f52"/><path d="M1250 1355L1185 1480 1170 1568M1240 1500q60-40 60 40l-100 28z" fill="#d4c8aa"/><path d="M1260 1350L1500 1510" stroke="#e4e2d6" stroke-width="22"/><circle cx="1355" cy="1505" r="18" fill="#1c2430" stroke="#ddd" stroke-width="6"/>
${dash([[1065,145],[890,350],[695,590],[475,855],[205,1185],[1315,195],[1160,405],[955,680],[728,985],[480,1325],[1450,10]],40,54,6)}
${dash([[965,975],[1090,1005],[755,1275],[860,1345],[545,1480]],53,74,7)}<path d="M820 1530l60-95" stroke="#d5d9d4" stroke-width="7"/>
</g>

<g transform="translate(1450 400) scale(.33333 .39541)">
<path d="M620 0H1371V760L1200 1090 860 870 740 740 640 870 480 790 230 690 500 250z" fill="#93836b"/><path d="M640 330l210-220 160 40-130 220-180-20z" fill="#756c69" opacity=".6"/>
<path d="M850 650L640 880 480 800 230 690 430 330 530 330 540 620 610 640 720 600z" fill="#22344c"/><path d="M720 600l120 30-10 100-140 50-90-70 20-100z" fill="#22344c"/>
<rect x="830" y="0" width="541" height="900" fill="#77705f" clip-path="url(#pile)"/><g clip-path="url(#pile)">${debris}</g>
<path d="M1160 95l90 30 50 60 10 60-60 0-50-40z" fill="#22324a"/><path d="M1235 225l65-10 10 45-35 15-15 70-20-15 8-60z" fill="#cc4d3c"/><path d="M1262 240l25-5 5 25-25 8z" fill="#4c2a2b"/>
<path d="M840 200l130 40 80 80 90 110-110-20-90-60-60-10-50-90z" fill="#26364b"/><path d="M875 370l140 50 100 20 25 40-40 25-80-30" stroke="#dcb76b" stroke-width="10" fill="none"/>
<path d="M905 700l110-50M910 740l130-70M905 765l140 20M920 720l130 30M950 690l100 60M970 650l70 40M900 765l90 40" stroke="#3a2932" stroke-width="9"/><path d="M920 710l120 40M930 680l100 50" stroke="#c9c0b0" stroke-width="4"/>
<path d="M840 630l40-20 30 40-70 80-40 10z" fill="#26364b" opacity=".8"/><path d="M1040 570l100 40-10 30-100-20z" fill="#2a3344" opacity=".8"/>
${cones}
<path d="M625 410l90 10-10 60-80-10z" fill="#202c3e"/><path d="M640 460l65 5-10 80-65-5z" fill="#93705f"/><path d="M645 500l50 5-5 40-50-5z" fill="#39424c"/><path d="M622 550l76 5-10 40-68-5z" fill="#e0483a"/>
<path d="M745 455l85 15-5 60-75-10z" fill="#1f2b3d"/><path d="M765 515l65 12-15 98-72-18z" fill="#252d3c" stroke="#dfb985" stroke-width="7"/>
<path d="M480 398l55 22-50 85-50-20z" fill="#b0b3be" stroke="#ded5c3" stroke-width="5"/><path d="M410 515l68 20-70 135-65-25z" fill="#adb2bf" stroke="#c4a790" stroke-width="5"/><path d="M490 378l55 15-5 20-45-10z" fill="#a9b5c2"/><path d="M470 605l45 15-20 50-45-15z" fill="#6c9bc6"/><path d="M440 655l50 15-20 30-40-12z" fill="#8fb4cc"/><path d="M510 650l20-18 20 12-10 35-28-5z" fill="#e3e3de"/>
<path d="M450 730l85 45-25 35-80-40z" fill="#cdc9b2"/><path d="M620 730l75 35-15 40-65-40z" fill="#4e6d92"/><path d="M590 795l70 15-30 40-65-25z" fill="#8fa39c"/><path d="M360 460l30 10-15 40-40-10z" fill="#dcd8cc"/>
<path d="M740 0l55 10-30 80-60-20z" fill="#5c7c88"/><path d="M910 40l60-40 60 10-70 75z" fill="#3c4752"/><path d="M1010 25l65 20-30 35-50-20z" fill="#c9d2cb"/><path d="M795 45l35 0-5 35-30 0z" fill="#e2d9bf"/>
<path d="M640 0L550 130 580 160 480 250 355 470 222 690" fill="none" stroke="#e1dfd0" stroke-width="12"/>
<path d="M850 800l110 50 120 40 120-40 60-110 111-40v110L1220 1060 980 960 820 880z" fill="#223852"/><path d="M980 960l60 30 80-60 100 20 120-150 31 0v60L1190 1080 1050 1020z" fill="#b3a38b"/>
<path d="M740 850L1200 1090 1240 1060 1371 830V1000L1230 1240 900 1080 640 890z" fill="#354d66"/><path d="M650 870L1240 1235M1371 990L1240 1220M640 870l115-125" stroke="#b2b596" stroke-width="13" fill="none"/><path d="M680 840L1200 1100" stroke="#4d6680" stroke-width="18"/>
${[[730,830],[780,900],[850,950],[910,990],[970,1030],[1035,1070],[1100,1110],[1170,1155]].map(([x,y])=>`<path d="M${x} ${y}l-28 42" stroke="#9dabaf" stroke-width="4"/>`).join('')}<path d="M1090 1125l160 0" stroke="#dde0dd" stroke-width="7"/>
<path d="M1371 1090l-60 60 60 50z" fill="#cdbb9c"/><path d="M1280 1190l91 40v90l-70-40z" fill="#6c5d58"/><path d="M1170 1230l201 130v40l-231-120z" fill="#1f3550"/>
<path d="M222 690L1371 1460V1568H150L60 900z" fill="#23384f"/><path d="M1005 1220L1371 1460V1568H1040z" fill="#625c55"/>
<path d="M222 690L560 900 990 1180 1371 1445" fill="none" stroke="#dcdccb" stroke-width="12"/><path d="M600 945L990 1200" stroke="#6885a5" stroke-width="12"/>
<path d="M120 650q60 40 90 60" stroke="#55708c" stroke-width="26" fill="none"/><path d="M0 810L110 650 100 600" stroke="#dadbcb" stroke-width="8" fill="none"/><path d="M60 830l85-130" stroke="#d2d7d5" stroke-width="7"/><path d="M140 705l90 65M120 740l90 60M100 770l80 55M80 800l80 50" stroke="#c6cccb" stroke-width="15"/><path d="M130 840l50 20 50 50M230 900l370 260" fill="none" stroke="#8493a0" stroke-width="5"/><path d="M110 820l60-10-20 40z" fill="#c7b9aa"/>
<path d="M160 955L680 1250 660 1300 380 1568H0V1170z" fill="#3d3c42"/><path d="M90 1065L0 1165V1460L160 1568H340L460 1360 360 1310 270 1210 190 1110z" fill="#878a82"/><path d="M90 1065L0 1300M150 1100L0 1460M220 1170L60 1500M300 1260L160 1568M360 1330L250 1568" stroke="#9a9d95" stroke-width="9" opacity=".6"/><path d="M0 1165L160 957 590 1203" stroke="#d4c4b2" stroke-width="7" fill="none"/><path d="M0 1450l150 118" stroke="#dddbd0" stroke-width="26"/><path d="M10 1475l90 60" stroke="#3e3b3b" stroke-width="9" stroke-dasharray="40 12"/>
<path d="M170 1150l35 10 10 25-40 0zM250 1150l40 5-15 35-35-10zM245 1110l45 0" fill="#a5a79c" stroke="#b9b7a8" stroke-width="7"/>
<path d="M590 1210L680 1260 560 1440 460 1568H340L460 1360z" fill="#2b4768"/><path d="M665 1260l15 40-110 160-20-10z" fill="#5a7390"/>
<path d="M630 1430L860 1530 840 1568H560z" fill="#56616c"/><path d="M730 1405l180 70-30 60-170-70z" fill="#4b6079"/>
<path d="M735 1170l-25 50 25 20" stroke="#dcdcd8" stroke-width="10" fill="none"/><path d="M375 940l15-15 10 10-15 15z" fill="#a5acb3"/><path d="M30 1060l50-50 20 20-50 80-30 5z" fill="#6a8cab"/>
<path d="M180 195q40-30 40 0l-50 50q-40 5-35-25z" fill="#8798ac"/><path d="M270 185l45 15-60 110-60-25z" fill="#b9beb8"/><path d="M190 285l60 20-15 35-35-15z" fill="#e4e4df"/><path d="M35 265l210 75M45 255L130 130" stroke="#c6c7ba" stroke-width="7" fill="none"/>
<path d="M250 40l60 20-20 45-55-20z" fill="#d8d3c4"/><path d="M380 0h60l-20 60q-30 20-50 0z" fill="#e3e3e0"/><path d="M440 60L330 240" stroke="#9c8d6c" stroke-width="28"/><path d="M320 250L290 380 200 470 190 520" stroke="#566b3f" stroke-width="26" fill="none"/><path d="M190 610L520 110" stroke="#a3adb0" stroke-width="6"/><path d="M480 90l50-20 10 40-20 70z" fill="#8b7a63"/>
<path d="M330 270L460 250 180 680 130 650z" fill="#22344a" opacity=".65"/><path d="M140 290l10 200" stroke="#17222f" stroke-width="7"/><path d="M150 410l60 40-20 30" stroke="#b9bfba" stroke-width="7" fill="none"/>
</g>

<rect x="993" y="71" width="914" height="949" filter="url(#n)" opacity=".28"/>
<rect x="993" y="71" width="914" height="949" filter="url(#d)" opacity=".28"/>
<g fill="none" stroke="#5aa1ea" stroke-width="7"><path d="M1617 66L1561 146 1303 503 990 923"/><path d="M1747 66L1734 95 1671 188 1526 455 1416 607 1245 908 1177 1025" /></g>
${[[1561,146],[1303,503],[1734,95],[1671,188],[1526,455],[1245,908]].map(p=>node(...p)).join('')}
<path d="M1405 640q-1-6 8-6l2-7q-6-3-2-4h13q1 4-3 6l-1 7q5 9-8 9-9 0-9-5z" fill="#f5e60a" stroke="#a59800" stroke-width=".8"/>${node(1416,634)}
<g fill="none" stroke="#b8c0c8" opacity=".5"><circle cx="1867" cy="121" r="38" stroke-width="2.200"/><circle cx="1867" cy="121" r="24.500"/><path d="M1864 360v37M1870 360v37M1858 397h17v21h-17z"/></g>
<rect x="1861" y="79" width="12" height="11" rx="3" fill="#fff"/><text x="1867" y="88" text-anchor="middle" font-family="Liberation Sans" font-weight="bold" font-size="10">N</text>
<text x="1248" y="622" textLength="325" font-family="Liberation Sans,Arial" font-size="22.500" fill="#fff" stroke="#111" stroke-width="2.600" paint-order="stroke" stroke-linejoin="round">35°31'46.42"N 139°44'19.88"E</text>
<text x="1811" y="1000" textLength="88" font-family="Open Sans" font-size="17" fill="#e6e6e6" opacity=".75">Google Earth</text>
<rect x="993" y="1014" width="914" height="6" fill="#1a212c" opacity=".5"/>
<rect x="1020" y="1011" width="41" height="12" rx="2" fill="#223" fill-opacity=".5" stroke="#777"/>
<circle cx="1009" cy="1022" r="7" fill="#cfe0f5" stroke="#1ba32a" stroke-width="3"/>
<g font-family="Open Sans" font-size="13" fill="#fff" stroke="#000" stroke-width="2" paint-order="stroke"><text x="1031" y="1025" font-weight="bold" textLength="23">1985</text><text x="1333" y="1025" textLength="151">Imagery Date: 10/24/2024</text><text x="1506" y="1025" textLength="188">35°31'46.75" N  139°44'20.03" E</text><text x="1704" y="1025">elev</text><text x="1748" y="1025">0 ft</text><text x="1788" y="1025">eye alt</text><text x="1842" y="1025">699 ft</text></g>
<path d="M1892 1022q-8-6 0-10" fill="none" stroke="#fff" stroke-width="3"/>
</svg>`});

def('earth-window',()=>`<style>
:host{display:flex;flex-direction:column;background:#eeebe6}
.t{height:25px;background:#f3f3f3;display:flex;justify-content:space-between;flex:none;color:#8a8a8a;padding:0 11px 0 30px}
.t fit-text{margin-top:2px}.t window-buttons{margin-top:3px}
.m{height:19px;border-bottom:1px solid #d0cdca;flex:none;display:flex;gap:13px;padding-left:10px;line-height:20px}
u{text-underline-offset:2px}
.b{flex:1;display:flex;min-height:0}
.h{width:3px;background:#eeebe6;flex:none}
.r{flex:1;display:flex;flex-direction:column;min-width:0}
.tb{height:26px;flex:none;background:linear-gradient(#fff,#fbfaf9 50%,#ece8e3);display:flex;align-items:center}
.act{width:28px;height:22px;border-radius:3px;background:linear-gradient(#84a8de,#5482c6);margin-left:12px;display:flex;align-items:center;justify-content:center;box-sizing:border-box;border:1px solid #4f78b8}
</style>
<div class="t"><fit-text w="91">Google Earth Pro</fit-text><window-buttons></window-buttons></div>
<div class="m"><fit-text w="20"><u>F</u>ile</fit-text><fit-text w="21"><u>E</u>dit</fit-text><fit-text w="25"><u>V</u>iew</fit-text><fit-text w="28"><u>T</u>ools</fit-text><fit-text w="22"><u>A</u>dd</fit-text><fit-text w="25"><u>H</u>elp</fit-text></div>
<div class="b"><earth-panel></earth-panel><div class="h"></div><div class="r"><div class="tb">
<span class="act"><svg width="18" height="16" viewBox="0 0 18 16"><path d="M.5 1.500h17v13H.5z" fill="#5b88cc" stroke="#e8eefb"/><path d="M1 2h16v2.500H1z" fill="#fff"/><path d="M1 6h5v8H1zM7.500 6H17v8H7.500z" fill="#fff"/></svg></span>
<icon-strip icons="pin poly path over cam"></icon-strip><icon-strip icons="clock sun"></icon-strip><icon-strip icons="planet"></icon-strip><icon-strip icons="ruler"></icon-strip><icon-strip icons="mail print page map globe"></icon-strip>
</div><satellite-map></satellite-map></div></div>`);

def('desk-top',`<style>
:host{display:block;position:relative;width:1907px;height:1020px;overflow:hidden;background:#f3f3f3}
:host>*{position:absolute}
.line{left:343px;top:1000px;width:1px;height:20px;background:#98a0a8}
.g{left:344px;top:990px;width:442px;height:30px;background:#eee}
earth-window{left:786px;top:0;width:1121px;height:1020px;box-shadow:-1px 0 0 #777}
main-window{left:0;top:0;width:851px;height:831px}
second-window{left:0;top:830px;width:968px;height:178px}
</style><div class="g"></div><div class="line"></div><earth-window></earth-window><main-window></main-window><second-window></second-window>`);
</script>
</body>
</html>
